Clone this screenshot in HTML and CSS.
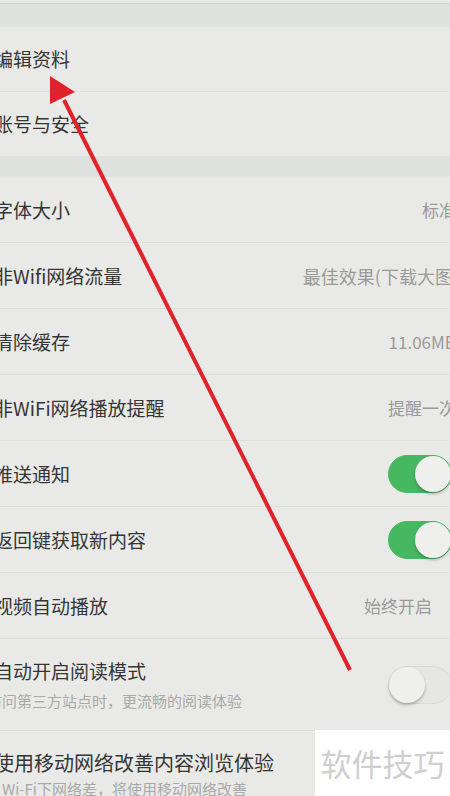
FILE: index.html
```html
<!DOCTYPE html>
<html>
<head>
  <meta charset="utf-8">
  <title>设置</title>
  <link rel="stylesheet" href="styles.css">
</head>
<body>
  <div class="page">
    <div class="tail"></div>
    <div class="gap"></div>

    <div class="group">
      <div class="row row-first"><span class="label">编辑资料</span></div>
      <div class="row row-short"><span class="label">账号与安全</span></div>
    </div>

    <div class="gap gap-mid"></div>

    <div class="group">
      <div class="row"><span class="label">字体大小</span><span class="value">标准</span></div>
      <div class="row"><span class="label">非Wifi网络流量</span><span class="value value-wide">最佳效果(下载大图)</span></div>
      <div class="row"><span class="label">清除缓存</span><span class="value">11.06MB</span></div>
      <div class="row"><span class="label">非WiFi网络播放提醒</span><span class="value">提醒一次</span></div>
      <div class="row"><span class="label">推送通知</span><span class="switch on"></span></div>
      <div class="row"><span class="label">返回键获取新内容</span><span class="switch on"></span></div>
      <div class="row"><span class="label">视频自动播放</span><span class="value value-inset">始终开启</span></div>
      <div class="row row-tall">
        <div class="text">
          <div class="label">自动开启阅读模式</div>
          <div class="sub">访问第三方站点时，更流畅的阅读体验</div>
        </div>
        <span class="switch"></span>
      </div>
      <div class="row row-last">
        <div class="text">
          <div class="label label-big">使用移动网络改善内容浏览体验</div>
          <div class="sub sub-plain">Wi-Fi下网络差，将使用移动网络改善</div>
        </div>
      </div>
    </div>
  </div>

  <!-- annotation arrow drawn over the screenshot -->
  <svg class="arrow" width="450" height="796" viewBox="0 0 450 796">
    <line x1="350" y1="670" x2="64" y2="100" stroke="#e0232b" stroke-width="4"/>
    <polygon points="50,76 50,104 75,92" fill="#e0232b"/>
  </svg>

  <div class="watermark">软件技巧</div>
</body>
</html>
```

FILE: styles.css
```css
html, body {
  margin: 0;
  height: 796px;
  overflow: hidden;
  background-color: #e9eae7;
  font-family: "Noto Sans CJK SC", "Noto Sans", sans-serif;
}

.page {
  width: 470px;
  margin-left: -6px;
}

.tail {
  height: 3px;
  border-bottom: 1px solid #d4d6d3;
}

.gap {
  height: 22px;
  background-color: #dfe1df;
  border-bottom: 1px solid #e3e5e2;
}

.gap-mid {
  height: 19px;
  border-top: 1px solid #e0e2df;
}

.row {
  display: flex;
  align-items: center;
  justify-content: space-between;
  height: 65px;
  padding-right: 8px;
  border-bottom: 1px solid #dcdedb;
}

.row-first {
  height: 64px;
}

.row-short {
  height: 64px;
  border-bottom: none;
}

.row-tall {
  height: 91px;
}

.row-last {
  height: 80px;
  align-items: flex-start;
  border-bottom: none;
}

.label {
  font-size: 19px;
  color: #353535;
  line-height: 24px;
}

.label-big {
  font-size: 20px;
  margin-top: 20px;
}

.value {
  font-size: 17px;
  color: #9a9a9a;
}

.value-wide {
  font-size: 18px;
  margin-right: -3px;
}

.value-inset {
  margin-right: 24px;
}

.sub {
  font-size: 15px;
  line-height: 20px;
  color: #a9a9a9;
  margin-top: 8px;
  margin-left: -7px;
}

.sub-plain {
  margin-top: 4px;
  margin-left: 8px;
}

.switch {
  position: relative;
  width: 62px;
  height: 36px;
  margin-right: 4px;
  border-radius: 19px;
  border: 1px solid #dadbd9;
  background-color: #e6e7e5;
}

.switch::after {
  content: "";
  position: absolute;
  top: 0;
  left: 0;
  width: 36px;
  height: 36px;
  border-radius: 50%;
  background-color: #efefee;
  box-shadow: 0 2px 3px rgba(0, 0, 0, 0.25);
}

.switch.on {
  background-color: #46b862;
  border-color: #46b862;
}

.switch.on::after {
  left: 26px;
}

.arrow {
  position: absolute;
  top: 0;
  left: 0;
}

.watermark {
  position: absolute;
  left: 315px;
  top: 730px;
  width: 135px;
  height: 66px;
  background-color: #fff;
  color: #cfcfcf;
  font-size: 31px;
  line-height: 66px;
  text-align: center;
}
```
